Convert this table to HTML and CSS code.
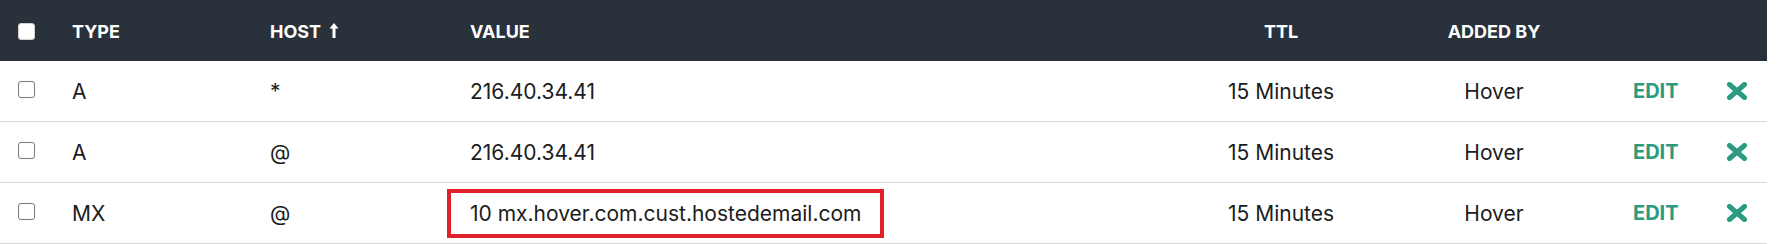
FILE: index.html
```html
<!DOCTYPE html>
<html>
<head>
<meta charset="utf-8">
<link rel="stylesheet" href="styles.css">
</head>
<body>
<div class="table">
  <div class="row head">
    <div class="cell"><span class="cb cb-head"></span></div>
    <div class="cell">TYPE</div>
    <div class="cell">HOST <svg class="arrow" width="10" height="15" viewBox="0 0 10 15"><polygon points="5,0 9.5,5.5 6.5,5.5 6.5,15 3.5,15 3.5,5.5 0.5,5.5" fill="#fff"/></svg></div>
    <div class="cell">VALUE</div>
    <div class="cell center">TTL</div>
    <div class="cell center">ADDED BY</div>
    <div class="cell"></div>
    <div class="cell"></div>
  </div>
  <div class="row">
    <div class="cell"><span class="cb"></span></div>
    <div class="cell">A</div>
    <div class="cell">*</div>
    <div class="cell">216.40.34.41</div>
    <div class="cell center">15 Minutes</div>
    <div class="cell center">Hover</div>
    <div class="cell edit">EDIT</div>
    <div class="cell del"><svg width="22" height="18" viewBox="0 0 22 18"><path d="M3.5 2.5 L18.5 15.5 M18.5 2.5 L3.5 15.5" stroke="#2b9a7e" stroke-width="5" stroke-linecap="round"/></svg></div>
  </div>
  <div class="row">
    <div class="cell"><span class="cb"></span></div>
    <div class="cell">A</div>
    <div class="cell">@</div>
    <div class="cell">216.40.34.41</div>
    <div class="cell center">15 Minutes</div>
    <div class="cell center">Hover</div>
    <div class="cell edit">EDIT</div>
    <div class="cell del"><svg width="22" height="18" viewBox="0 0 22 18"><path d="M3.5 2.5 L18.5 15.5 M18.5 2.5 L3.5 15.5" stroke="#2b9a7e" stroke-width="5" stroke-linecap="round"/></svg></div>
  </div>
  <div class="row">
    <div class="cell"><span class="cb"></span></div>
    <div class="cell">MX</div>
    <div class="cell">@</div>
    <div class="cell"><span class="highlight">10 mx.hover.com.cust.hostedemail.com</span></div>
    <div class="cell center">15 Minutes</div>
    <div class="cell center">Hover</div>
    <div class="cell edit">EDIT</div>
    <div class="cell del"><svg width="22" height="18" viewBox="0 0 22 18"><path d="M3.5 2.5 L18.5 15.5 M18.5 2.5 L3.5 15.5" stroke="#2b9a7e" stroke-width="5" stroke-linecap="round"/></svg></div>
  </div>
</div>
</body>
</html>
```
FILE: styles.css
```css
html, body {
  margin: 0;
  padding: 0;
  background: #ffffff;
}
body {
  font-family: Inter, "Liberation Sans", sans-serif;
  color: #1c1c1c;
}
.table {
  width: 1767px;
}
.row {
  display: grid;
  grid-template-columns: 72px 198px 200px 731px 160px 266px 80px 60px;
  height: 60px;
  border-bottom: 1px solid #d8d8d8;
  font-size: 21px;
  align-items: center;
}
.row.head {
  height: 61px;
  border-bottom: none;
  background: #29313a;
  color: #ffffff;
  font-weight: 700;
  font-size: 18px;
}
.cell {
  display: flex;
  align-items: center;
  white-space: nowrap;
}
.cell.center {
  justify-content: center;
}
.head .cell {
  padding-top: 1px;
}
.cb {
  display: block;
  width: 15px;
  height: 15px;
  margin-left: 18px;
  border: 1.5px solid #7a7a7a;
  border-radius: 3px;
  background: #fff;
  margin-top: -3px;
}
.cb-head {
  border-color: #d0d0d0;
  margin-top: 1px;
}
.arrow {
  margin-left: 8px;
  margin-top: -2px;
}
.edit {
  padding-left: 6px;
  color: #2b9a7e;
  font-weight: 700;
  font-size: 20px;
}
.del {
  padding-left: 19px;
}
.highlight {
  display: inline-block;
  margin-left: -23px;
  padding: 8px 19px 8px 19px;
  border: 4px solid #e0212b;
}
```
